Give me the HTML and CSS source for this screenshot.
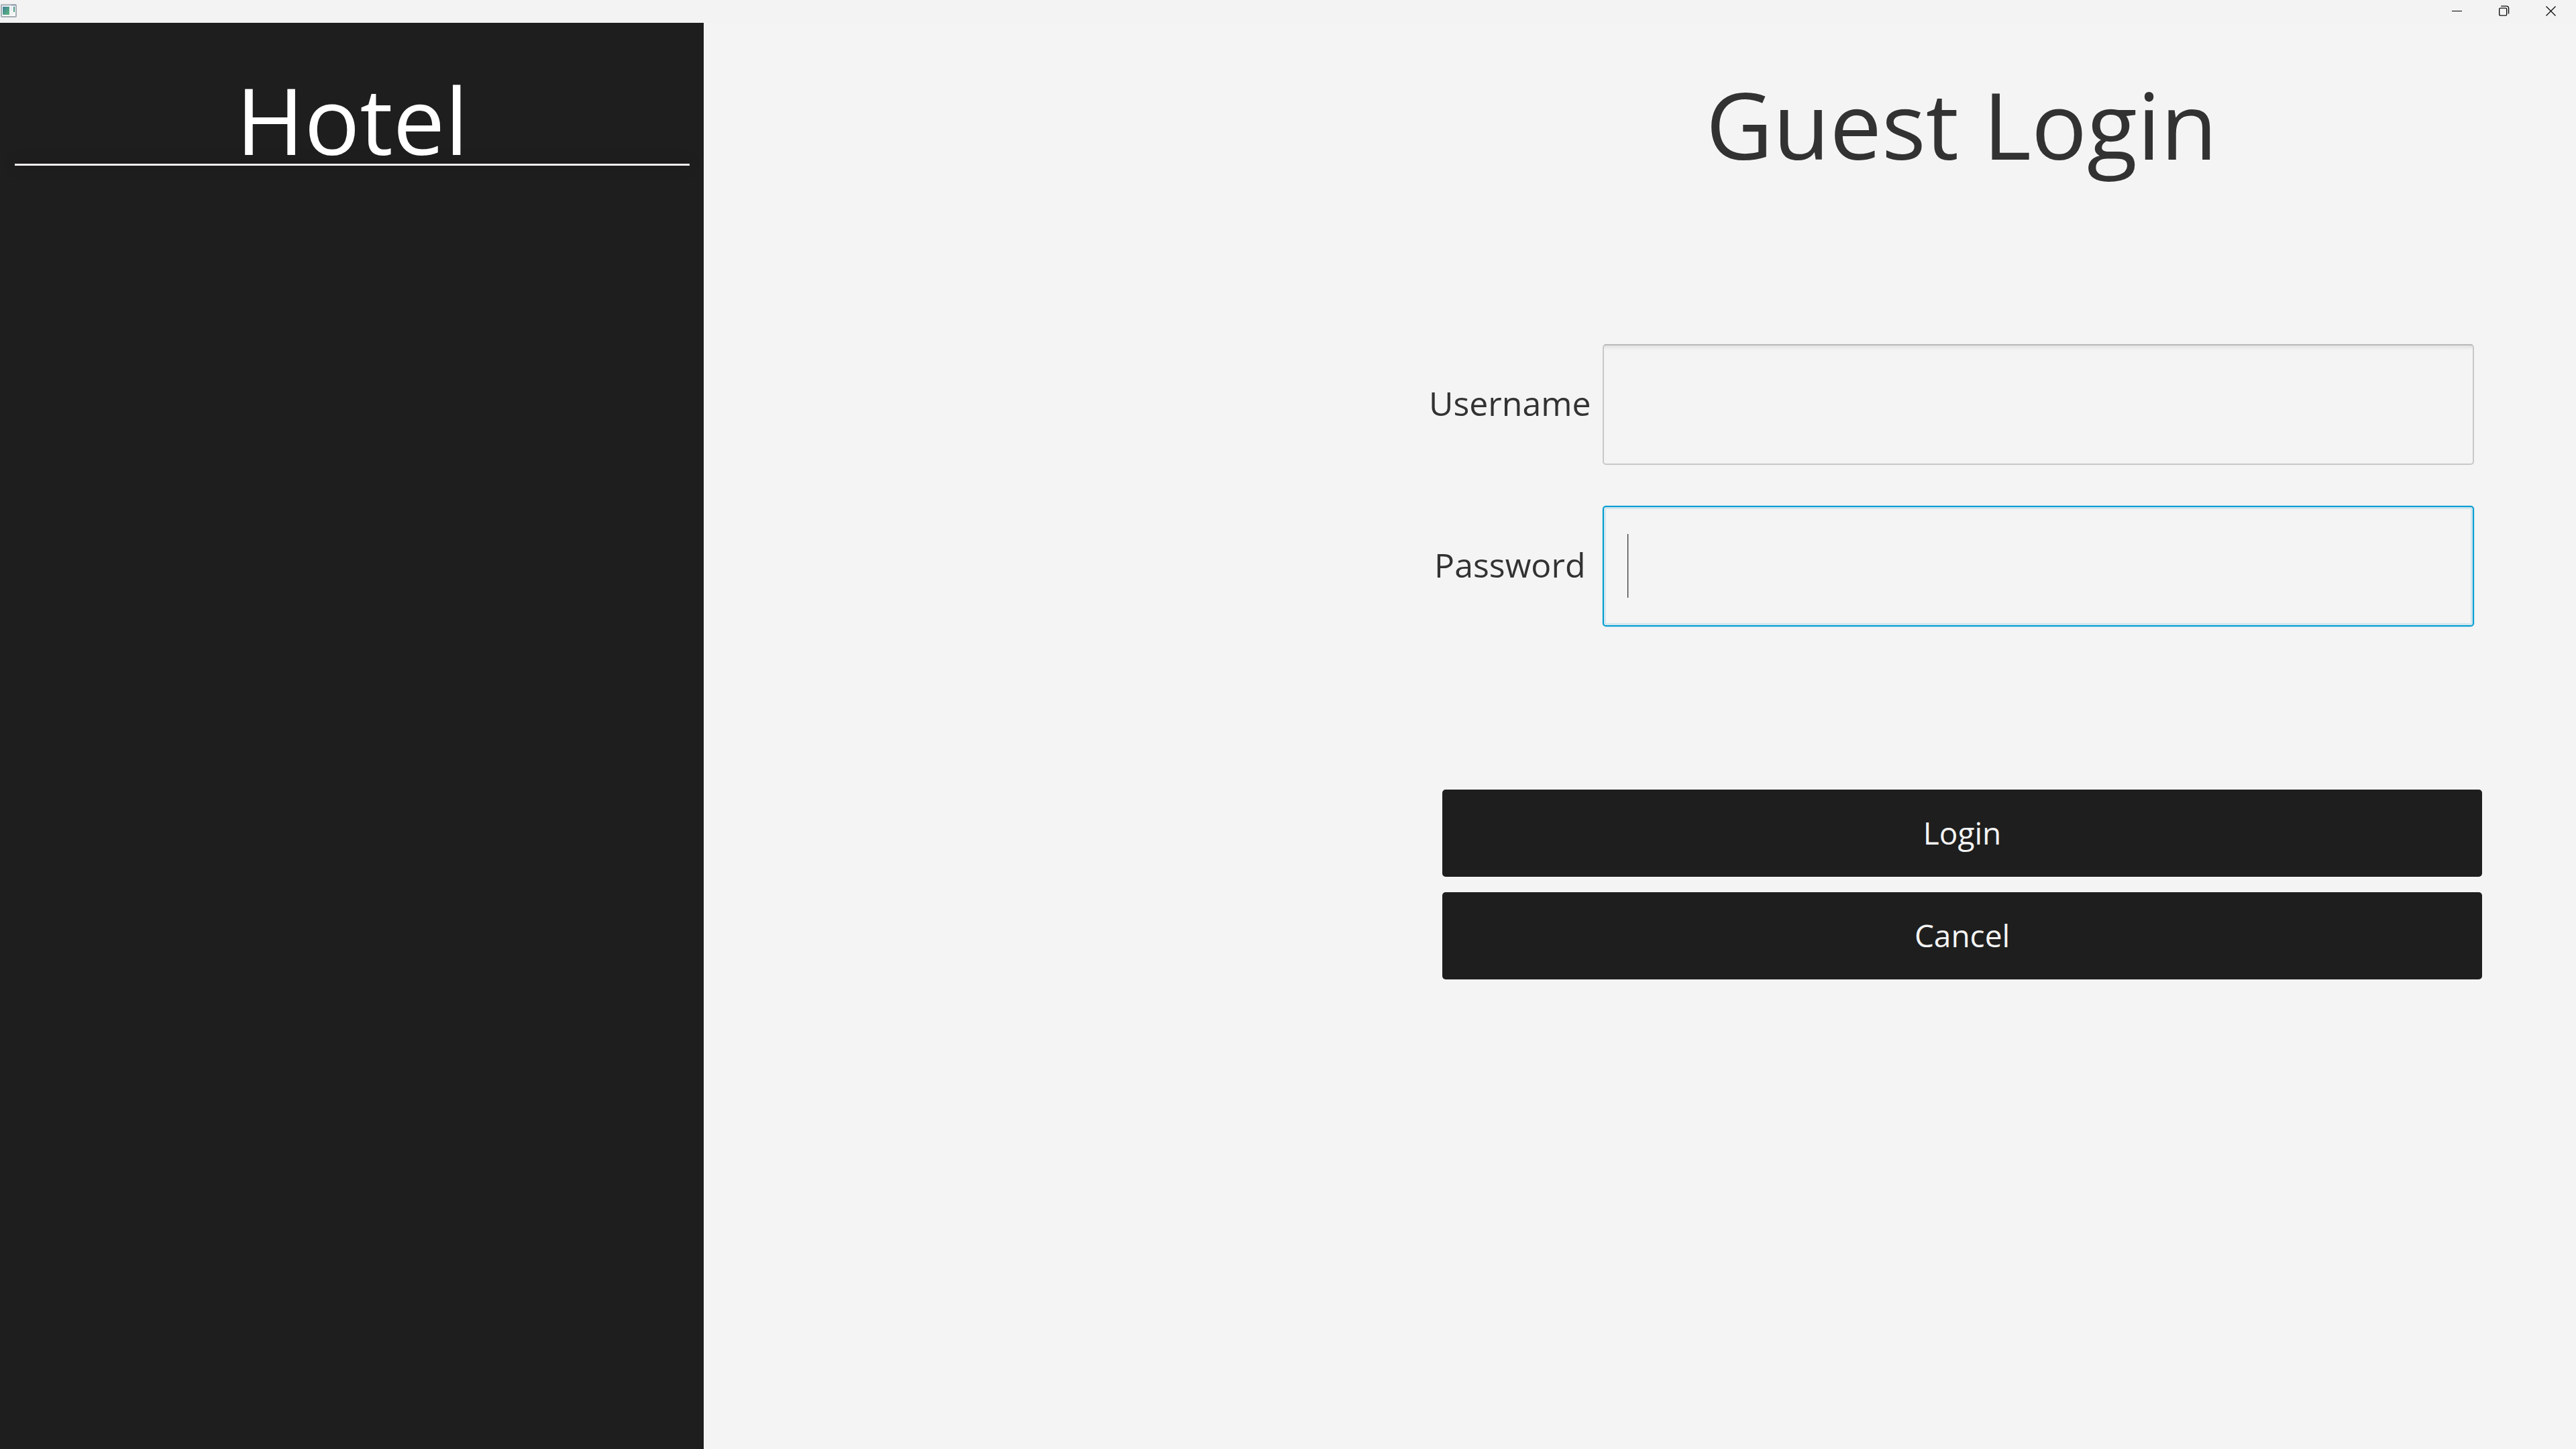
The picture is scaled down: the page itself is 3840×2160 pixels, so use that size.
FILE: index.html
```html
<!DOCTYPE html>
<html lang="en">
<head>
<meta charset="utf-8">
<title>Hotel</title>
<link rel="stylesheet" href="styles.css">
</head>
<body>
<header class="titlebar">
  <svg class="app-icon" width="24" height="20" viewBox="0 0 24 20" aria-hidden="true">
    <defs>
      <linearGradient id="pane" x1="0" y1="0" x2="1" y2="1">
        <stop offset="0" stop-color="#3f7e9c"/>
        <stop offset="1" stop-color="#5cb87a"/>
      </linearGradient>
    </defs>
    <rect x="1" y="1" width="22" height="18" rx="1" fill="#fafbfb" stroke="#a5adb5" stroke-width="2"/>
    <rect x="2" y="1" width="20" height="2" fill="#c3cad1"/>
    <rect x="16" y="1" width="6" height="1" fill="#8b9bb0"/>
    <rect x="3" y="4" width="10" height="12" fill="url(#pane)"/>
    <rect x="14" y="4" width="4" height="7" fill="#e9ecec"/>
    <rect x="19" y="4" width="2" height="8" fill="url(#pane)"/>
    <rect x="14" y="12" width="4" height="4" fill="#eef0f0"/>
  </svg>
  <div class="window-controls">
    <button class="window-button" type="button" aria-label="Minimize">
      <svg width="16" height="16" viewBox="0 0 16 16"><path d="M0 8.5h15" stroke="#000" fill="none"/></svg>
    </button>
    <button class="window-button" type="button" aria-label="Restore">
      <svg width="16" height="16" viewBox="0 0 16 16" fill="none" stroke="#111" stroke-width="1.4"><rect x="0.7" y="4.1" width="11" height="11" rx="1.5"/><path d="M3.2 1.1h8a3.4 3.4 0 0 1 3.4 3.4v8"/></svg>
    </button>
    <button class="window-button" type="button" aria-label="Close">
      <svg width="16" height="16" viewBox="0 0 16 16"><path d="M.5 1.5l14 14M14.5 1.5l-14 14" stroke="#111" stroke-width="1.4" fill="none"/></svg>
    </button>
  </div>
</header>
<div class="layout">
  <aside class="sidebar">
    <h1 class="brand">Hotel</h1>
    <hr class="divider">
  </aside>
  <main class="content">
    <form class="login">
      <h2 class="heading">Guest Login</h2>
      <div class="fields">
        <label class="label" for="username">Username</label>
        <input class="input" id="username" type="text">
        <label class="label" for="password">Password</label>
        <div class="active-field">
          <input class="input input-active" id="password" type="password">
          <span class="caret"></span>
        </div>
      </div>
      <div class="actions">
        <button class="action" type="submit">Login</button>
        <button class="action" type="button">Cancel</button>
      </div>
    </form>
  </main>
</div>
</body>
</html>
```

FILE: styles.css
```css
* {
  box-sizing: border-box;
}

body {
  margin: 0;
  min-height: 100vh;
  display: flex;
  flex-direction: column;
  background: #f4f4f4;
  color: #323232;
  font-family: "Segoe UI", "Open Sans", sans-serif;
}

.titlebar {
  display: flex;
  align-items: center;
  justify-content: space-between;
  height: 34px;
  padding: 0 2px 2px 1px;
  background: #f3f3f3;
}

.app-icon,
.window-button svg {
  display: block;
}

.window-controls {
  display: flex;
}

.window-button {
  display: flex;
  align-items: center;
  justify-content: center;
  width: 70px;
  height: 32px;
  padding: 0;
  border: 0;
  background: none;
}

.layout {
  flex: 1;
  display: grid;
  grid-template-columns: 1049fr 2791fr;
}

.sidebar {
  padding: 76px 21px 0 22px;
  background: #1e1e1e;
}

.brand {
  margin: 0;
  color: #fff;
  font-size: 138px;
  font-weight: 400;
  line-height: 134px;
  text-align: center;
}

.divider {
  height: 3px;
  margin: 0;
  border: 0;
  background: #f6f1f4;
  box-shadow: 0 0 20px rgba(0, 0, 0, 0.4);
}

.content {
  display: grid;
  grid-template-columns: 1081fr 1570fr 140fr;
  align-items: start;
  padding-top: 56px;
}

.login {
  grid-column: 2;
}

.heading {
  margin: 0 0 235px 18px;
  font-size: 138px;
  font-weight: 400;
  line-height: 188px;
  text-align: center;
}

.fields {
  display: grid;
  grid-template-columns: auto 1fr;
  align-items: center;
  gap: 61px 17px;
  padding-right: 12px;
}

.label {
  padding-bottom: 4px;
  font-size: 50px;
  line-height: 68px;
  text-align: center;
}

.input {
  display: block;
  width: 100%;
  height: 180px;
  padding: 0 36px;
  border: 2px solid #c8c8c8;
  border-top-color: #b8b8b8;
  border-radius: 5px;
  outline: 0;
  background: linear-gradient(#e2e2e2, #f4f4f4 7px);
  color: #323232;
  font: inherit;
  font-size: 50px;
}

.input-active {
  border-color: #039ed3;
  background: #f4f4f4;
  box-shadow: 0 0 0 1px #cde5ee, inset 0 0 0 3px #d3e6ed;
}

.active-field {
  position: relative;
}

.caret {
  position: absolute;
  top: 42px;
  left: 37px;
  width: 2px;
  height: 95px;
  border-right: 1px solid #c0c0c0;
  background: #323232;
}

.actions {
  display: grid;
  gap: 23px;
  margin: 243px 0 0 20px;
}

.action {
  height: 130px;
  padding: 0 0 2px;
  border: 0;
  border-radius: 5px;
  background: #1e1e1e;
  color: #f4f4f4;
  font: inherit;
  font-size: 46px;
}
```
